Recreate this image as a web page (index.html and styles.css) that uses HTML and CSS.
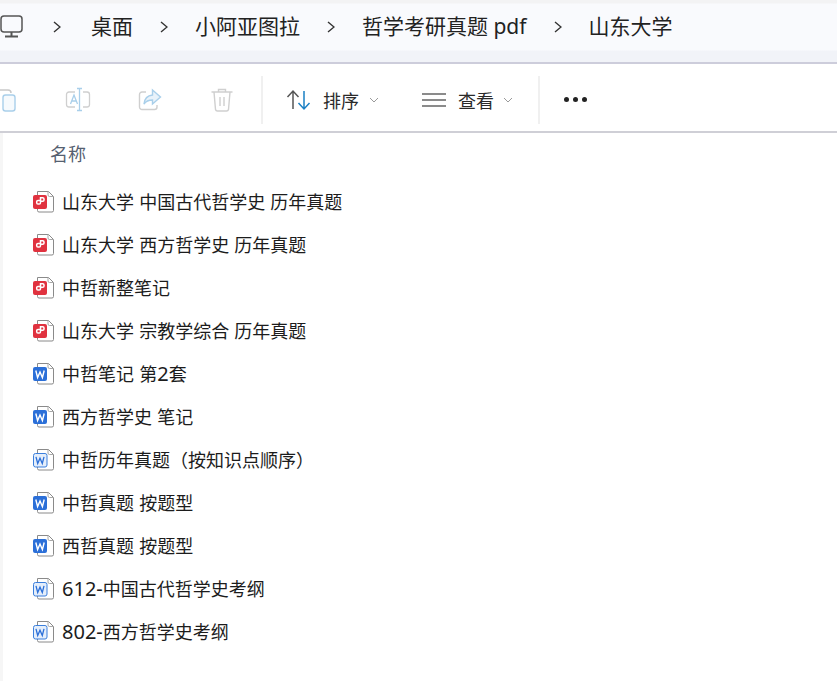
FILE: index.html
```html
<!DOCTYPE html>
<html lang="zh-CN">
<head>
<meta charset="utf-8">
<title>山东大学</title>
<link rel="stylesheet" href="styles.css">
</head>
<body>
<svg class="defs" width="0" height="0" aria-hidden="true">
  <symbol id="page" viewBox="0 0 22 22">
    <path d="M4.500 .5h11l5 5v14a1.500 1.500 0 0 1-1.500 1.500h-13a1.500 1.500 0 0 1-1.500-1.500z" fill="#fff" stroke="#8a8a8a" stroke-width="1"/>
    <path d="M15 .5v3.500a1.500 1.500 0 0 0 1.500 1.500h4" fill="none" stroke="#a8a8a8" stroke-width="1"/>
  </symbol>
  <symbol id="pdf" viewBox="0 0 22 22">
    <use href="#page" width="22" height="22"/>
    <rect x="0" y="4" width="14" height="14" rx="2" fill="#e0323f"/>
    <path d="M7.500 6.800h2.200a1.300 1.300 0 0 1 1.300 1.300v.9a1.300 1.300 0 0 1-1.300 1.300H7.500zM7.500 10.300v1.400a1.300 1.300 0 0 1-1.300 1.300H5a1.300 1.300 0 0 1-1.300-1.300v-.9A1.300 1.300 0 0 1 5 9.500h2.500" fill="none" stroke="#fff" stroke-width="1.500"/>
  </symbol>
  <symbol id="doc" viewBox="0 0 22 22">
    <use href="#page" width="22" height="22"/>
    <rect x="0" y="4" width="14" height="14" rx="2" fill="#2b6fd8"/>
    <path d="M2.800 7.500l1.800 7 2.400-5.500 2.400 5.500 1.800-7" fill="none" stroke="#fff" stroke-width="1.400"/>
  </symbol>
  <symbol id="docl" viewBox="0 0 22 22">
    <use href="#page" width="22" height="22"/>
    <rect x=".5" y="4.500" width="13.500" height="13.500" rx="2" fill="#e4eefb" stroke="#3b7fdc" stroke-width="1"/>
    <path d="M3 7.800l1.700 6.700 2.300-5.300 2.300 5.300 1.700-6.700" fill="none" stroke="#2b6fd8" stroke-width="1.300"/>
  </symbol>
</svg>

<nav class="crumbs">
  <svg class="pc" viewBox="0 0 24 24" width="24" height="24"><rect x="1" y="1" width="21" height="16" rx="3" fill="none" stroke="#555" stroke-width="1.500"/><path d="M11.500 17v4M5 21.500h13" fill="none" stroke="#555" stroke-width="2"/></svg>
  <svg class="chev" viewBox="0 0 8 12" width="8" height="12"><path d="M1 1l6 5-6 5" fill="none" stroke="#333" stroke-width="1.400"/></svg>
  <span class="lead">桌面</span>
  <svg class="chev" viewBox="0 0 8 12" width="8" height="12"><path d="M1 1l6 5-6 5" fill="none" stroke="#333" stroke-width="1.400"/></svg>
  <span>小阿亚图拉</span>
  <svg class="chev" viewBox="0 0 8 12" width="8" height="12"><path d="M1 1l6 5-6 5" fill="none" stroke="#333" stroke-width="1.400"/></svg>
  <span>哲学考研真题 pdf</span>
  <svg class="chev" viewBox="0 0 8 12" width="8" height="12"><path d="M1 1l6 5-6 5" fill="none" stroke="#333" stroke-width="1.400"/></svg>
  <span>山东大学</span>
</nav>

<div class="toolbar">
  <svg class="tool paste" viewBox="0 0 24 26" width="24" height="26"><path d="M2 3h8a3 3 0 0 1 3 3" fill="none" stroke="#c9c9c9" stroke-width="1.500"/><rect x="5" y="8" width="12" height="16" rx="2.500" fill="#f6fafd" stroke="#a9cfea" stroke-width="1.400"/></svg>
  <svg class="tool rename" viewBox="0 0 26 26" width="26" height="26"><path d="M10 5H4a2.500 2.500 0 0 0-2.500 2.500v10A2.500 2.500 0 0 0 4 20h6M18 5h4a2.500 2.500 0 0 1 2.500 2.500v10A2.500 2.500 0 0 1 22 20h-4" fill="none" stroke="#cfcfcf" stroke-width="1.300"/><path d="M5.500 17l3.500-9 3.500 9M7 14h4" fill="none" stroke="#a9cfea" stroke-width="1.300"/><path d="M12 1.500h5M14.500 1.500v22M12 23.500h5" fill="none" stroke="#a9cfea" stroke-width="1.300"/></svg>
  <svg class="tool share" viewBox="0 0 24 24" width="24" height="24"><path d="M8 4H4a2.500 2.500 0 0 0-2.500 2.500V19A2.500 2.500 0 0 0 4 21.500h12.500A2.500 2.500 0 0 0 19 19v-2" fill="none" stroke="#cfcfcf" stroke-width="1.400"/><path d="M14.500 2l8 7-8 7v-4c-4 0-6.500 1-8.500 4 .5-5 3.500-8.500 8.500-9z" fill="#e8f2fa" stroke="#a9cfea" stroke-width="1.400"/></svg>
  <svg class="tool trash" viewBox="0 0 24 26" width="24" height="26"><path d="M1.500 5h21M8.500 5V2.500h7V5M4 5l1.500 17.500A2 2 0 0 0 7.500 24h9a2 2 0 0 0 2-1.500L20 5M10 10v9M14 10v9" fill="none" stroke="#cfcfcf" stroke-width="1.400"/></svg>
  <div class="sep first"></div>
  <div class="cmd sort">
    <svg viewBox="0 0 26 22" width="26" height="22"><path d="M7 20V2M1.500 8L7 2l5.500 6" fill="none" stroke="#555" stroke-width="1.500"/><path d="M18 2v18M12.500 14l5.500 6 5.500-6" fill="none" stroke="#1b80c4" stroke-width="1.500"/></svg>
    <span>排序</span>
    <svg class="caret" viewBox="0 0 10 6" width="10" height="6"><path d="M1 1l4 4 4-4" fill="none" stroke="#9a9a9a" stroke-width="1"/></svg>
  </div>
  <div class="cmd view">
    <svg viewBox="0 0 24 16" width="24" height="16"><path d="M0 2h24M0 8h24M0 14h24" fill="none" stroke="#666" stroke-width="1.300"/></svg>
    <span>查看</span>
    <svg class="caret" viewBox="0 0 10 6" width="10" height="6"><path d="M1 1l4 4 4-4" fill="none" stroke="#9a9a9a" stroke-width="1"/></svg>
  </div>
  <div class="sep second"></div>
  <div class="dots"><i></i><i></i><i></i></div>
</div>

<main class="list">
  <div class="head">名称</div>
  <ul class="files">
    <li><svg class="ic"><use href="#pdf" width="22" height="22"/></svg><span>山东大学 中国古代哲学史 历年真题</span></li>
    <li><svg class="ic"><use href="#pdf" width="22" height="22"/></svg><span>山东大学 西方哲学史 历年真题</span></li>
    <li><svg class="ic"><use href="#pdf" width="22" height="22"/></svg><span>中哲新整笔记</span></li>
    <li><svg class="ic"><use href="#pdf" width="22" height="22"/></svg><span>山东大学 宗教学综合 历年真题</span></li>
    <li><svg class="ic"><use href="#doc" width="22" height="22"/></svg><span>中哲笔记 第<b class="num">2</b>套</span></li>
    <li><svg class="ic"><use href="#doc" width="22" height="22"/></svg><span>西方哲学史 笔记</span></li>
    <li><svg class="ic"><use href="#docl" width="22" height="22"/></svg><span>中哲历年真题（按知识点顺序）</span></li>
    <li><svg class="ic"><use href="#doc" width="22" height="22"/></svg><span>中哲真题 按题型</span></li>
    <li><svg class="ic"><use href="#doc" width="22" height="22"/></svg><span>西哲真题 按题型</span></li>
    <li><svg class="ic"><use href="#docl" width="22" height="22"/></svg><span><b class="num">612-</b>中国古代哲学史考纲</span></li>
    <li><svg class="ic"><use href="#docl" width="22" height="22"/></svg><span><b class="num">802-</b>西方哲学史考纲</span></li>
  </ul>
</main>
</body>
</html>
```

FILE: styles.css
```css
* { box-sizing: border-box; }
html, body { margin: 0; padding: 0; height: 100%; overflow: hidden; }
body {
  background: #fff;
  color: #1c1c1c;
  font-family: "Noto Sans", "Noto Sans CJK SC", sans-serif;
  font-size: 18px;
}
.defs { display: block; height: 0; }

.crumbs {
  height: 64px;
  display: flex;
  align-items: center;
  gap: 27px;
  padding-bottom: 9px;
  font-size: 21px;
  line-height: 1;
  color: #222;
  background: linear-gradient(#f3f3f4 0, #f3f3f4 3px, #f9fafd 4px, #f9fafd 50px, #f1f3f8 51px);
  border-bottom: 2px solid #cdcddb;
  white-space: nowrap;
}
.crumbs span { flex: none; }
.crumbs .lead { margin-left: 3px; }
.pc { flex: none; margin-right: 2px; }
.chev { flex: none; }

.toolbar {
  height: 69px;
  display: flex;
  align-items: center;
  padding-top: 4px;
  border-bottom: 2px solid #cfcfd6;
  white-space: nowrap;
}
.tool { flex: none; }
.paste { margin-left: -2px; }
.rename { margin-left: 43px; }
.share { margin-left: 47px; }
.trash { margin-left: 48px; }
.sep { flex: none; width: 2px; height: 48px; background: #f0f0f0; }
.sep.first { margin-left: 27px; }
.cmd { flex: none; display: flex; align-items: center; color: #2a2a2a; }
.cmd svg { flex: none; }
.sort { margin-left: 23px; gap: 11px; }
.sort .caret { margin-left: -1px; }
.view { margin-left: 43px; gap: 12px; }
.view .caret { margin-left: -3px; }
.sep.second { margin-left: 25px; }
.dots { flex: none; display: flex; gap: 4px; margin-left: 24px; }
.dots i { display: block; width: 5px; height: 5px; border-radius: 50%; background: #222; }

.list {
  height: 548px;
  border-left: 3px solid #f6f6f6;
}
.head {
  height: 47px;
  padding: 8px 0 0 47px;
  line-height: 26px;
  color: #556070;
}
.files {
  list-style: none;
  margin: 0;
  padding: 0 0 0 30px;
}
.files li {
  height: 43px;
  display: flex;
  align-items: center;
  gap: 7px;
  line-height: 1;
  white-space: nowrap;
  color: #1c1c1c;
  word-spacing: .5px;
}
.ic { flex: none; width: 22px; height: 22px; }
.num { font-weight: 400; font-size: 20px; line-height: 1; }
```
